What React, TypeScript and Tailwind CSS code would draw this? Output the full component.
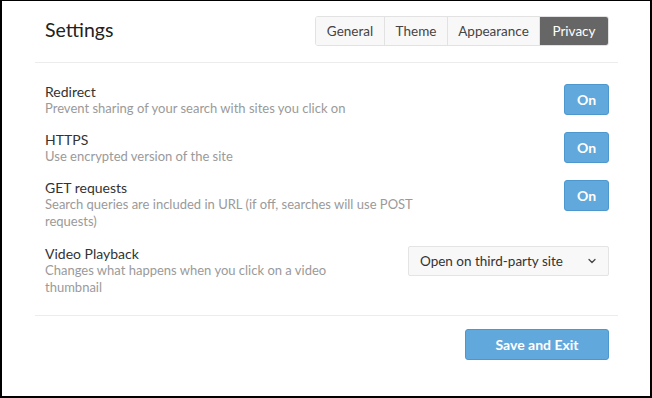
import { ChevronDown } from "lucide-react";

const tabs = [
  { label: "General", w: "w-[69px]" },
  { label: "Theme", w: "w-[63px]" },
  { label: "Appearance", w: "w-[92px]" },
  { label: "Privacy", w: "w-[68px]" },
];

const rows = [
  {
    title: "Redirect",
    desc: "Prevent sharing of your search with sites you click on",
    h: "h-[48px]",
  },
  { title: "HTTPS", desc: "Use encrypted version of the site", h: "h-[48px]" },
  {
    title: "GET requests",
    desc: "Search queries are included in URL (if off, searches will use POST requests)",
    h: "h-[66px]",
  },
];

function OnButton() {
  return (
    <button className="flex h-[31px] w-[45px] shrink-0 items-center justify-center rounded-[3px] border border-[#4d97cf] bg-[#61a8dc] text-[14px] font-bold text-white">
      On
    </button>
  );
}

function RowText({ title, desc }: { title: string; desc: string }) {
  return (
    <div className="-mt-[1px] max-w-[375px] leading-[17px]">
      <div className="text-[14px] text-[#333]">{title}</div>
      <div className="text-[13px] text-[#9a9a9a]">{desc}</div>
    </div>
  );
}

export default function App() {
  return (
    <div
      className="h-[398px] w-[652px] border-t border-r-2 border-b-2 border-l-2 border-black bg-white"
      style={{ fontFamily: "Lato, 'Open Sans', sans-serif" }}
    >
      <div className="pr-[32px] pl-[33px]">
        <div className="flex h-[45px] items-end justify-between pr-[9px] pl-[10px]">
          <h1 className="mb-[1px] text-[19.5px] leading-[30px] text-[#222]">Settings</h1>
          <div className="flex h-[30px] overflow-hidden rounded-[3px] border border-[#e2e2e2] text-[13.5px]">
            {tabs.map((t) => (
              <div
                key={t.label}
                className={
                  t.label === "Privacy"
                    ? `flex items-center justify-center bg-[#666] text-white ${t.w}`
                    : `flex items-center justify-center border-r border-[#e2e2e2] bg-[#f8f8f8] text-[#444] ${t.w}`
                }
              >
                {t.label}
              </div>
            ))}
          </div>
        </div>
        <div className="mt-[16px] h-px bg-[#ececec]" />

        <div className="pt-[21px] pr-[9px] pl-[10px]">
          {rows.map((r) => (
            <div key={r.title} className={`flex items-start justify-between gap-[30px] ${r.h}`}>
              <RowText title={r.title} desc={r.desc} />
              <OnButton />
            </div>
          ))}
          <div className="flex h-[69px] items-start justify-between gap-[30px]">
            <RowText
              title="Video Playback"
              desc="Changes what happens when you click on a video thumbnail"
            />
            <div className="flex h-[30px] w-[201px] shrink-0 items-center justify-between rounded-[2px] border border-[#e4e4e4] bg-[#f8f8f8] pr-[10px] pl-[11px] text-[13.5px] text-[#333]">
              <span>Open on third-party site</span>
              <ChevronDown size={12} strokeWidth={2.5} className="text-[#444]" />
            </div>
          </div>
        </div>

        <div className="h-px bg-[#ececec]" />
        <div className="flex justify-end pt-[13px] pr-[9px] pl-[10px]">
          <button className="h-[31px] w-[144px] rounded-[3px] border border-[#4d97cf] bg-[#61a8dc] text-[14px] font-bold text-white">
            Save and Exit
          </button>
        </div>
      </div>
    </div>
  );
}
